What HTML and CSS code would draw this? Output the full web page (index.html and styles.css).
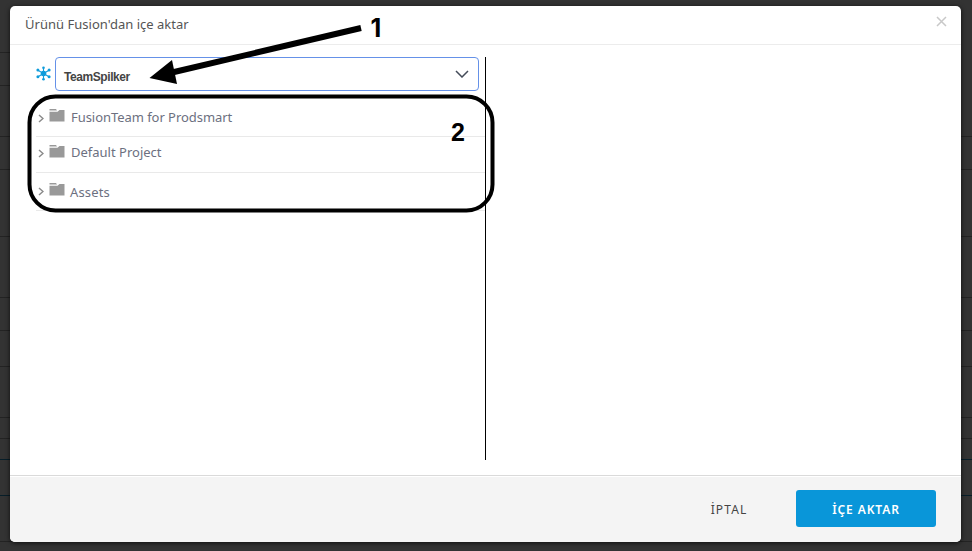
FILE: index.html
```html
<!DOCTYPE html>
<html lang="tr">
<head>
<meta charset="utf-8">
<title>Ürünü Fusion'dan içe aktar</title>
<link rel="stylesheet" href="styles.css">
</head>
<body>
<svg class="backdrop" width="972" height="551" aria-hidden="true">
  <path stroke="#232323" d="M0 52.5H10M0 85.5H10M0 136.5H972M0 169.5H972M0 236.5H972M0 297.5H972M0 330.5H972M0 366.5H972M0 417.5H972M0 438.5H972M0 541.5H972"/>
  <path stroke="#071e29" d="M0 459.5H972M0 495.5H972"/>
</svg>
<section class="dialog">
  <header class="header">
    <h1 class="title">Ürünü Fusion'dan içe aktar</h1>
    <button class="close" aria-label="Kapat"><svg width="11" height="11" viewBox="0 0 11 11"><path d="M1 1l9 9M10 1l-9 9"/></svg></button>
  </header>
  <main class="content">
    <div class="browser">
      <div class="picker">
        <svg class="hub" width="15" height="15" viewBox="0 0 15 15">
          <path d="M7.5 7.5V1.6M7.5 7.5v5.9M7.5 7.5L2 4.2M7.5 7.5L13 4.2M7.5 7.5L2 10.7M7.5 7.5l5.500 3.200"/>
          <circle cx="7.500" cy="7.500" r="2.800"/><circle cx="7.500" cy="1.700" r="1.300"/><circle cx="7.500" cy="13.300" r="1.300"/><circle cx="1.900" cy="4" r="1.500"/><circle cx="13.100" cy="4" r="1.500"/><circle cx="1.900" cy="10.800" r="1.500"/><circle cx="13.100" cy="10.800" r="1.500"/>
        </svg>
        <div class="select"><span class="team">TeamSpilker</span><svg width="14" height="8" viewBox="0 0 14 8"><path d="M1 1l6 6 6-6"/></svg></div>
      </div>
      <ul class="tree">
        <li class="row first"><svg class="chevron" width="6" height="9" viewBox="0 0 6 9"><path d="M1 1l4 3.500-4 3.500"/></svg><svg class="folder" width="16" height="13" viewBox="0 0 16 13"><path d="M.5 0h6.500l1 1.500H.5zM.5 2.700h8L10.500 1h5v11.500H.5z"/></svg><span class="name name-a">FusionTeam for Prodsmart</span></li>
        <li class="row second"><svg class="chevron" width="6" height="9" viewBox="0 0 6 9"><path d="M1 1l4 3.500-4 3.500"/></svg><svg class="folder" width="16" height="13" viewBox="0 0 16 13"><path d="M.5 0h6.500l1 1.500H.5zM.5 2.700h8L10.500 1h5v11.500H.5z"/></svg><span class="name name-b">Default Project</span></li>
        <li class="row third"><svg class="chevron" width="6" height="9" viewBox="0 0 6 9"><path d="M1 1l4 3.500-4 3.500"/></svg><svg class="folder" width="16" height="13" viewBox="0 0 16 13"><path d="M.5 0h6.500l1 1.500H.5zM.5 2.700h8L10.500 1h5v11.500H.5z"/></svg><span class="name name-c">Assets</span></li>
      </ul>
    </div>
  </main>
  <footer class="footer">
    <button class="cancel">İPTAL</button>
    <button class="submit">İÇE AKTAR</button>
  </footer>
</section>
<svg class="notes" width="972" height="551">
  <rect x="29.500" y="96.500" width="463" height="114" rx="26"/>
  <path class="shaft" d="M361 28L172 72.500"/>
  <path class="head" d="M149.500 78L172 60l5 24z"/>
  <text class="one" x="370.500" y="37">1</text>
  <text x="451" y="141">2</text>
</svg>
</body>
</html>
```

FILE: styles.css
```css
* { box-sizing: border-box; }
body {
  margin: 0;
  width: 972px;
  height: 551px;
  padding: 6px 11px 9px 10px;
  overflow: hidden;
  background: #333;
  font-family: "Noto Sans", "Open Sans", sans-serif;
}
svg { display: block; flex: none; }
.backdrop { position: absolute; left: 0; top: 0; }
.dialog {
  position: relative;
  display: flex;
  flex-direction: column;
  height: 536px;
  overflow: hidden;
  border-radius: 5px;
  background: #fff;
  box-shadow: 0 1px 5px #000b;
}
.header {
  display: flex;
  justify-content: space-between;
  height: 39px;
  padding: 0 14px;
  border-bottom: 1px solid #ececec;
}
.title {
  margin: 0 0 0 1px;
  color: #555;
  font-size: 13px;
  font-weight: 400;
  line-height: 37px;
  letter-spacing: .02px;
}
button { padding: 0; border: 0; background: none; font: inherit; }
.close { height: 11px; margin-top: 10px; }
.close path { fill: none; stroke: #c8c8c8; stroke-width: 1.500; }
.content { flex: 1; padding: 12px 0 0 26px; }
.browser { width: 450px; height: 403px; border-right: 1px solid #000; }
.picker { display: flex; gap: 4px; height: 34px; }
.hub { margin-top: 9px; fill: #0f9cdb; stroke: #0f9cdb; stroke-width: 1.100; }
.hub circle { stroke: none; }
.select {
  display: flex;
  align-items: center;
  justify-content: space-between;
  width: 424px;
  padding: 0 9px 0 8px;
  border: 1px solid #6591e8;
  border-radius: 4px;
}
.select path { fill: none; stroke: #444b59; stroke-width: 1.500; }
.team {
  padding-top: 5px;
  color: #444;
  font: 700 12px/16px "Liberation Sans", Arial, sans-serif;
  letter-spacing: -.42px;
}
.tree { margin: 0; padding: 6px 0 0; list-style: none; }
.row { display: flex; border-bottom: 1px solid #e9e9e9; }
.first { height: 40px; padding-top: 12px; }
.second { height: 36px; padding-top: 8px; }
.third { height: 38px; padding-top: 10px; }
.chevron { margin: 5px 5px 0 2px; fill: none; stroke: #8b8b8b; stroke-width: 1.500; }
.second .chevron { margin-top: 4px; }
.third .chevron { margin-top: 4px; }
.folder { margin-right: 6px; fill: #999; }
.third .folder { margin-right: 5px; }
.name { color: #6c7080; font-size: 13px; line-height: 16px; }
.name-a { letter-spacing: -.05px; }
.name-b { margin-top: -1px; letter-spacing: 0; }
.name-c { margin-top: 1px; letter-spacing: .15px; }
.footer {
  display: flex;
  justify-content: flex-end;
  height: 67px;
  padding: 14px 25px 0;
  border-top: 1px solid #dadada;
  background: #f4f4f4;
  box-shadow: inset 0 1px #fff;
}
.cancel { width: 86px; height: 37px; margin-right: 24px; padding-top: 2px; color: #444; font-size: 12px; letter-spacing: 1.100px; }
.submit { width: 140px; height: 37px; padding-top: 2px; border-radius: 3px; background: #0996d9; color: #fff; font-size: 12px; font-weight: 600; letter-spacing: .9px; }
.notes { position: absolute; left: 0; top: 0; pointer-events: none; }
.notes rect { fill: none; stroke: #000; stroke-width: 4; }
.shaft { stroke: #000; stroke-width: 6; }
.notes text { font: 700 25px "Liberation Sans", Arial, sans-serif; }
.notes .one { font-family: Inter, sans-serif; }
```
